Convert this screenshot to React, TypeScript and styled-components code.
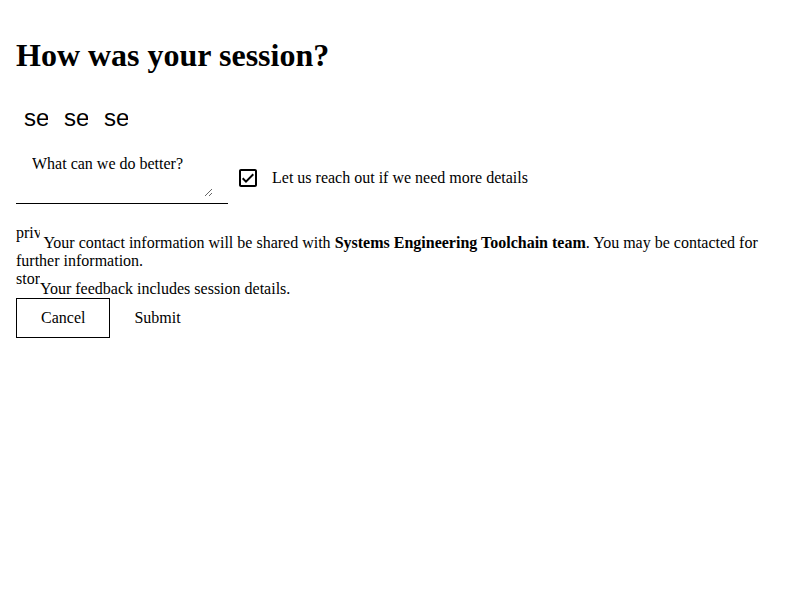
import React, { useState } from 'react'
import styled, { createGlobalStyle } from 'styled-components'

const GlobalStyle = createGlobalStyle`
  body {
    margin: 0;
    background: #fff;
    color: #000;
    font-family: 'Liberation Serif', 'Times New Roman', serif;
    font-size: 16px;
  }
`

const Page = styled.div`
  padding: 16px;
`

const Title = styled.h1`
  margin: 21px 0 24px;
  font-size: 32px;
  font-weight: 700;
`

const RatingRow = styled.div`
  display: flex;
`

const RatingButton = styled.button`
  display: inline-flex;
  padding: 8px;
  border: none;
  background: none;
  cursor: pointer;
`

// the icon font is missing, so only the start of the ligature name shows
const BrokenIcon = styled.span<{ $size: number; $sans?: boolean }>`
  display: inline-block;
  width: 24px;
  height: 24px;
  overflow: hidden;
  white-space: nowrap;
  font-size: ${props => props.$size}px;
  line-height: ${props => (props.$sans ? 1 : 'normal')};
  font-family: ${props => (props.$sans ? "'Liberation Sans', Arial, sans-serif" : 'inherit')};
`

const FeedbackRow = styled.div`
  display: flex;
  align-items: center;
  margin-top: 13px;
`

const TextareaWrap = styled.div`
  width: 212px;
  box-sizing: border-box;
  padding: 4px 15px 6px 16px;
  border-bottom: 1px solid #000;
`

const Comment = styled.textarea`
  display: block;
  width: 181px;
  height: 42px;
  box-sizing: border-box;
  padding: 0;
  border: none;
  outline: none;
  font-family: inherit;
  font-size: 16px;
  color: #000;

  &::placeholder {
    color: #000;
  }
`

const CheckLabel = styled.label`
  display: flex;
  align-items: center;
  gap: 12px;
  margin-left: 8px;
  cursor: pointer;
`

const NoticeList = styled.div`
  margin-top: 20px;
`

const Notice = styled.div`
  line-height: normal;
`

const Actions = styled.div`
  display: flex;
`

const ActionButton = styled.button<{ $outlined?: boolean }>`
  height: 40px;
  padding: 0 24px;
  border: ${props => (props.$outlined ? '1px solid #000' : 'none')};
  background: #fff;
  font-family: inherit;
  font-size: 16px;
  color: #000;
  cursor: pointer;
`

function CheckBoxIcon({ checked }: { checked: boolean }) {
  return (
    <svg width="24" height="24" viewBox="0 0 24 24" fill="#000">
      <path d="M19 3H5c-1.11 0-2 .9-2 2v14c0 1.1.89 2 2 2h14c1.11 0 2-.9 2-2V5c0-1.1-.89-2-2-2zm0 16H5V5h14v14z" />
      {checked && <path d="M17.99 9l-1.41-1.42-6.59 6.59-2.58-2.57-1.42 1.41 4 3.99z" />}
    </svg>
  )
}

const ratings = ['se', 'se', 'se']

export default function App() {
  const [comment, setComment] = useState('')
  const [contactMe, setContactMe] = useState(true)

  return (
    <>
      <GlobalStyle />
      <Page>
        <Title>How was your session?</Title>
        <RatingRow>
          {ratings.map((name, i) => (
            <RatingButton key={i} type="button">
              <BrokenIcon $size={24} $sans>
                {name}
              </BrokenIcon>
            </RatingButton>
          ))}
        </RatingRow>
        <FeedbackRow>
          <TextareaWrap>
            <Comment
              placeholder="What can we do better?"
              value={comment}
              onChange={(e: any) => setComment(e.target.value)}
            />
          </TextareaWrap>
          <CheckLabel onClick={() => setContactMe(!contactMe)}>
            <CheckBoxIcon checked={contactMe} />
            <span>Let us reach out if we need more details</span>
          </CheckLabel>
        </FeedbackRow>
        <NoticeList>
          <Notice>
            <BrokenIcon $size={16}>priv</BrokenIcon> Your contact information will be shared with{' '}
            <b>Systems Engineering Toolchain team</b>. You may be contacted for further information.
          </Notice>
          <Notice>
            <BrokenIcon $size={16}>stor</BrokenIcon>Your feedback includes session details.
          </Notice>
        </NoticeList>
        <Actions>
          <ActionButton type="button" $outlined>
            Cancel
          </ActionButton>
          <ActionButton type="button">Submit</ActionButton>
        </Actions>
      </Page>
    </>
  )
}
